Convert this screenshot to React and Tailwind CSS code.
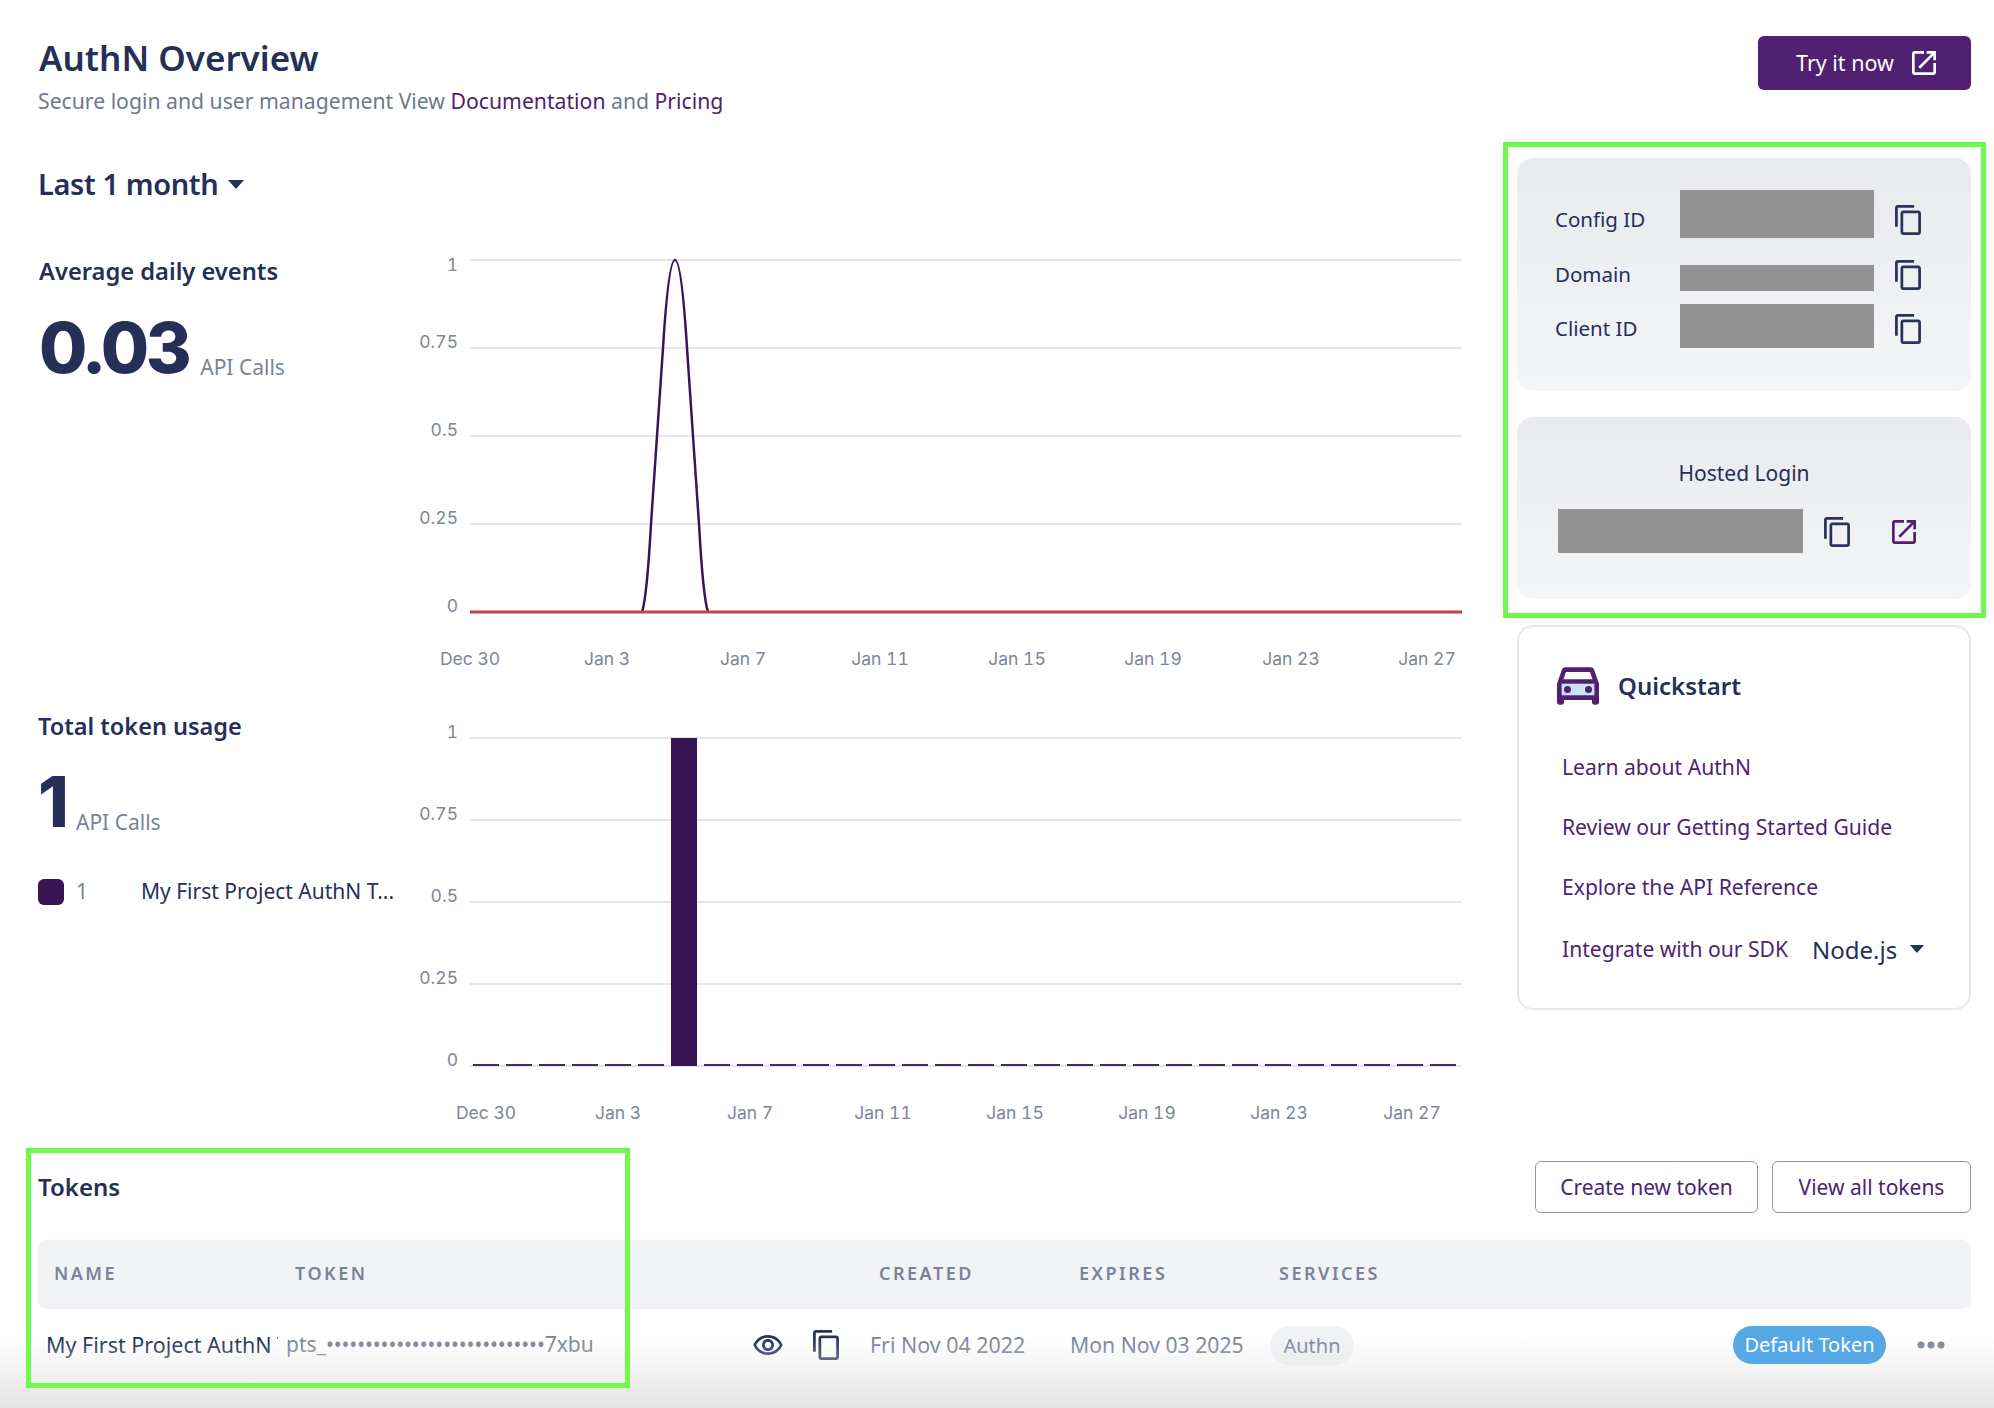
function CopyIcon({ className = "w-[26px] h-[30px] text-[#28325a]" }) {
  return (
    <svg viewBox="2 1 19 22" className={className} fill="currentColor">
      <path d="M16 1H4c-1.1 0-2 .9-2 2v14h2V3h12V1zm3 4H8c-1.1 0-2 .9-2 2v14c0 1.1.9 2 2 2h11c1.1 0 2-.9 2-2V7c0-1.1-.9-2-2-2zm0 16H8V7h11v14z" />
    </svg>
  );
}

function OpenIcon({ className }) {
  return (
    <svg viewBox="3 3 18 18" className={className} fill="currentColor">
      <path d="M19 19H5V5h7V3H5c-1.11 0-2 .9-2 2v14c0 1.1.89 2 2 2h14c1.1 0 2-.9 2-2v-7h-2v7zM14 3v2h3.59l-9.83 9.83 1.41 1.41L19 6.41V10h2V3h-7z" />
    </svg>
  );
}

function Caret({ className }) {
  return (
    <svg viewBox="0 0 16 9" className={className} fill="currentColor">
      <path d="M0 0h16L8 9z" />
    </svg>
  );
}

function CarIcon() {
  return (
    <svg viewBox="3 5 18 16" className="w-[42px] h-[38px]">
      <rect x="5" y="12" width="14" height="5" fill="#c9e2f5" />
      <path
        fill="#4f2170"
        d="M18.92 6.01C18.72 5.42 18.16 5 17.5 5h-11c-.66 0-1.21.42-1.42 1.01L3 12v8c0 .55.45 1 1 1h1c.55 0 1-.45 1-1v-1h12v1c0 .55.45 1 1 1h1c.55 0 1-.45 1-1v-8l-2.08-5.99zM6.85 7h10.29l1.08 3.11H5.77L6.85 7zM19 17H5v-5h14v5z"
      />
      <circle cx="7.5" cy="14.5" r="1.5" fill="#4f2170" />
      <circle cx="16.5" cy="14.5" r="1.5" fill="#4f2170" />
    </svg>
  );
}

function EyeIcon() {
  return (
    <svg viewBox="1 4 22 15" className="w-[30px] h-[20px] text-[#28325a]" fill="currentColor">
      <path d="M12 6c3.79 0 7.17 2.13 8.82 5.5C19.17 14.87 15.79 17 12 17s-7.17-2.13-8.82-5.5C4.83 8.13 8.21 6 12 6m0-2C7 4 2.73 7.11 1 11.5 2.73 15.89 7 19 12 19s9.27-3.11 11-7.5C21.27 7.11 17 4 12 4zm0 5c1.38 0 2.5 1.12 2.5 2.5S13.38 14 12 14s-2.5-1.12-2.5-2.5S10.62 9 12 9m0-2c-2.48 0-4.5 2.02-4.5 4.5S9.52 16 12 16s4.5-2.02 4.5-4.5S14.48 7 12 7z" />
    </svg>
  );
}

const yTicks = ["1", "0.75", "0.5", "0.25", "0"];
const axisFont = {
  fontFamily: "Inter, sans-serif",
  fontSize: 17.5,
  fill: "#7d859c",
  style: { fontVariantNumeric: "tabular-nums" },
};
const dateLabels = ["Dec 30", "Jan 3", "Jan 7", "Jan 11", "Jan 15", "Jan 19", "Jan 23", "Jan 27"];

function EventsChart() {
  const xs = [70, 207, 343, 480, 617, 753, 891, 1027];
  const ys = [10, 98, 186, 274, 362];
  return (
    <svg width="1070" height="430" viewBox="0 0 1070 430" className="block">
      {ys.map((y, i) => (
        <g key={y}>
          <line x1="70" x2="1062" y1={y} y2={y} stroke="#e4e4ec" strokeWidth="2" />
          <text x="58" y={i === 0 ? y + 11 : y} textAnchor="end" {...axisFont}>
            {yTicks[i]}
          </text>
        </g>
      ))}
      <path
        d="M242 362 C246 350 249 310 251 274 C253 245 255 215 257 186 C259 155 261 125 263 98 C266 50 270 10 275 10 C280 10 284 50 287 98 C289 125 291 155 293 186 C295 215 297 245 299 274 C301 310 304 350 308 362"
        fill="none"
        stroke="#38155a"
        strokeWidth="2.5"
      />
      <line x1="70" x2="1062" y1="362" y2="362" stroke="#c4423f" strokeWidth="3" />
      {xs.map((x, i) => (
        <text key={x} x={x} y="415" textAnchor="middle" {...axisFont}>
          {dateLabels[i]}
        </text>
      ))}
    </svg>
  );
}

function UsageChart() {
  const xs = [86, 218, 350, 483, 615, 747, 879, 1012];
  const ys = [30, 112, 194, 276, 358];
  const bars = Array.from({ length: 30 }, (_, i) => 73 + i * 33);
  return (
    <svg width="1070" height="421" viewBox="0 0 1070 421" className="block">
      {ys.map((y, i) => (
        <g key={y}>
          <line x1="70" x2="1062" y1={y} y2={y} stroke="#e4e4ec" strokeWidth="2" />
          <text x="58" y={y} textAnchor="end" {...axisFont}>
            {yTicks[i]}
          </text>
        </g>
      ))}
      {bars.map((x, i) =>
        i === 6 ? (
          <rect key={x} x={x} y="30" width="26" height="328" fill="#3a1556" />
        ) : (
          <rect key={x} x={x} y="356" width="26" height="2" fill="#4c2472" />
        )
      )}
      {xs.map((x, i) => (
        <text key={x} x={x} y="411" textAnchor="middle" {...axisFont}>
          {dateLabels[i]}
        </text>
      ))}
    </svg>
  );
}

function CredRow({ label, blockClass, className }) {
  return (
    <div className={`flex items-center h-[0px] ${className}`}>
      <span className="w-[125px] -mt-[2px] text-[20.5px] text-[#252f58]">{label}</span>
      <div className={`w-[194px] bg-[#929292] ${blockClass}`} />
      <div className="ml-[21px]">
        <CopyIcon />
      </div>
    </div>
  );
}

function QuickLink({ children }) {
  return <a className="text-[21.1px] leading-[28px] text-[#4c2472] block">{children}</a>;
}

export default function App() {
  return (
    <div
      className="relative w-[1994px] h-[1408px] overflow-hidden bg-white pl-[38px] pr-[23px] pt-[36px] text-[#252f58]"
      style={{ fontFamily: '"Noto Sans", sans-serif' }}
    >
      {/* header */}
      <div className="flex justify-between items-start h-[122px]">
        <div>
          <h1 className="text-[35px] leading-[46px] font-semibold -mt-[1px] ml-[1px]">AuthN Overview</h1>
          <p className="text-[21.2px] leading-[30px] text-[#6f7890] mt-[5px]">
            Secure login and user management View{" "}
            <a className="text-[#4f2170]">Documentation</a> and{" "}
            <a className="text-[#4f2170]">Pricing</a>
          </p>
        </div>
        <button className="w-[213px] h-[54px] pl-[3px] bg-[#4f2170] rounded-md text-white text-[21.5px] flex items-center justify-center gap-[18px]">
          Try it now
          <OpenIcon className="w-[24px] h-[24px]" />
        </button>
      </div>

      <div className="flex justify-between h-[1000px]">
        {/* charts */}
        <div className="w-[1432px]">
          <div className="flex items-center gap-[10px] h-[52px]">
            <span className="text-[29px] font-semibold tracking-[-0.4px]">Last 1 month</span>
            <Caret className="w-[16px] h-[9px]" />
          </div>

          <div className="flex mt-[40px] h-[430px]">
            <div className="w-[362px]">
              <h3 className="text-[23.7px] leading-[42px] font-semibold ml-[1px]">Average daily events</h3>
              <div className="flex items-end mt-[21px] h-[70px] ml-[1px]">
                <span className="text-[70px] leading-[70px] font-extrabold tracking-[-3.5px]" style={{ fontFamily: "Inter, sans-serif" }}>
                  0.03
                </span>
                <span className="text-[21px] leading-[30px] text-[#7a8299] ml-[12px] mb-[1px]">API Calls</span>
              </div>
            </div>
            <EventsChart />
          </div>

          <div className="flex mt-[28px]">
            <div className="w-[362px]">
              <h3 className="text-[23.5px] leading-[36px] font-semibold">Total token usage</h3>
              <div className="flex items-end mt-[27px] h-[62px]">
                <span className="w-[26px] text-[70px] leading-[62px] font-extrabold pt-[7px]" style={{ fontFamily: "Inter, sans-serif" }}>
                  1
                </span>
                <span className="text-[21px] leading-[30px] text-[#7a8299] ml-[12px] -mb-[4px]">API Calls</span>
              </div>
              <div className="flex items-center mt-[46px] h-[26px]">
                <span className="w-[26px] h-[26px] rounded-md bg-[#3a1556]" />
                <span className="w-[77px] pl-[12px] text-[21px] text-[#7a8299]">1</span>
                <span className="text-[21px] whitespace-nowrap">My First Project AuthN T...</span>
              </div>
            </div>
            <UsageChart />
          </div>
        </div>

        {/* sidebar */}
        <div className="w-[454px] flex flex-col">
          <div className="h-[233px] rounded-2xl bg-gradient-to-b from-[#e9eaed] to-[#f4f5f7] pl-[38px]">
            <CredRow label="Config ID" blockClass="h-[48px] -mt-[12px]" className="mt-[62px]" />
            <CredRow label="Domain" blockClass="h-[26px] mt-[6px]" className="mt-[55px]" />
            <CredRow label="Client ID" blockClass="h-[44px] -mt-[6px]" className="mt-[54px]" />
          </div>
          <div className="h-[182px] mt-[26px] rounded-2xl bg-gradient-to-b from-[#e9eaed] to-[#f4f5f7]">
            <div className="text-center text-[21px] leading-[30px] mt-[41px]">Hosted Login</div>
            <div className="flex items-center pl-[41px] mt-[21px]">
              <div className="w-[245px] h-[44px] bg-[#929292]" />
              <div className="ml-[21px] mt-[2px]">
                <CopyIcon />
              </div>
              <OpenIcon className="ml-[42px] mt-[2px] w-[24px] h-[24px] text-[#4f2170]" />
            </div>
          </div>
          <div className="h-[385px] mt-[26px] rounded-2xl border-2 border-[#e7e7e7] pl-[38px]">
            <div className="flex items-center gap-[19px] mt-[40px]">
              <CarIcon />
              <span className="text-[24px] font-semibold">Quickstart</span>
            </div>
            <div className="ml-[5px] mt-[48px] flex flex-col gap-[32px]">
              <QuickLink>Learn about AuthN</QuickLink>
              <QuickLink>Review our Getting Started Guide</QuickLink>
              <QuickLink>Explore the API Reference</QuickLink>
              <div className="flex items-center mt-[1px]">
                <QuickLink>Integrate with our SDK</QuickLink>
                <span className="ml-[24px] text-[24px] leading-[28px] mt-[2px]">Node.js</span>
                <Caret className="ml-[12px] w-[16px] h-[8px]" />
              </div>
            </div>
          </div>
        </div>
      </div>

      {/* tokens overlap the bottom of the charts row in the screenshot */}
      <div className="absolute left-[38px] right-[23px] top-[1161px]">
        <div className="flex items-center justify-between h-[52px]">
          <h3 className="text-[24px] font-semibold">Tokens</h3>
          <div className="flex gap-[14px]">
            <button className="w-[223px] h-[52px] rounded-md border border-[#a588bb] text-[21px] text-[#4c2472] pt-[1px]">
              Create new token
            </button>
            <button className="w-[199px] h-[52px] rounded-md border border-[#a588bb] text-[21px] text-[#4c2472] pt-[1px]">
              View all tokens
            </button>
          </div>
        </div>
        <div className="grid grid-cols-[241px_584px_200px_200px_1fr] items-center h-[69px] mt-[27px] pl-[16px] pb-[3px] rounded-lg bg-[#f2f3f7] text-[18px] font-semibold tracking-[2.5px] text-[#7a8299]">
          <span>NAME</span>
          <span>TOKEN</span>
          <span>CREATED</span>
          <span>EXPIRES</span>
          <span>SERVICES</span>
        </div>
        <div className="flex items-center h-[72px] text-[21px] text-[#7a8299]">
          <span className="ml-[8px] w-[232px] overflow-hidden whitespace-nowrap text-[21.5px] text-[#252f58]">
            My First Project AuthN Token
          </span>
          <span className="ml-[8px] w-[467px] whitespace-nowrap">
            pts_<span className="tracking-[-0.08px]">••••••••••••••••••••••••••••</span>7xbu
          </span>
          <EyeIcon />
          <div className="ml-[30px]">
            <CopyIcon />
          </div>
          <span className="ml-[31px] w-[200px] text-[21.4px] whitespace-nowrap">Fri Nov 04 2022</span>
          <span className="w-[200px] text-[21.2px] whitespace-nowrap">Mon Nov 03 2025</span>
          <span className="w-[84px] h-[39px] rounded-full bg-[#f1f2f6] flex items-center justify-center text-[20px] pt-[2px]">
            Authn
          </span>
          <span className="relative z-10 ml-[379px] w-[153px] h-[38px] rounded-full bg-[#56a8e4] text-white flex items-center justify-center text-[20px]">
            Default Token
          </span>
          <svg viewBox="0 0 28 8" className="ml-[31px] w-[28px] h-[8px] text-[#7a8299]" fill="currentColor">
            <circle cx="4" cy="4" r="3.5" />
            <circle cx="14" cy="4" r="3.5" />
            <circle cx="24" cy="4" r="3.5" />
          </svg>
        </div>
      </div>

      {/* bottom fade */}
      <div className="absolute left-0 right-0 bottom-0 h-[70px] bg-gradient-to-b from-[#ffffff00] to-[#e4e4e4] pointer-events-none" />

      {/* annotation frames */}
      <div className="absolute left-[1503px] top-[142px] w-[483px] h-[476px] border-[5px] border-[#70f94d] pointer-events-none" />
      <div className="absolute left-[26px] top-[1148px] w-[604px] h-[240px] border-[5px] border-[#70f94d] pointer-events-none" />
    </div>
  );
}
